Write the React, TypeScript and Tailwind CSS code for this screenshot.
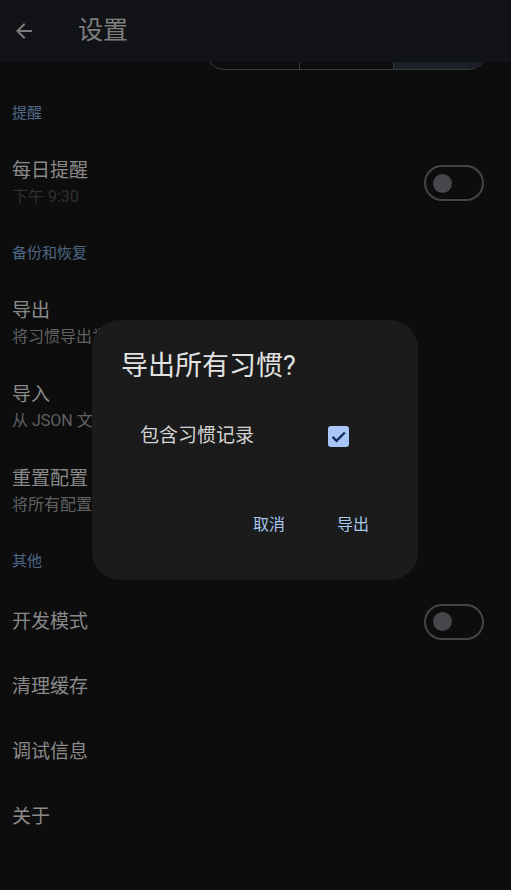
import React, { useState } from 'react';

const font = "font-[Roboto,'Noto_Sans_CJK_SC',sans-serif]";

const Toggle = ({ on }: { on: boolean }) => (
  <div className="w-[60px] h-[36px] rounded-full border-2 border-[#44444a] flex items-center px-[7px]">
    <div className={`w-[19px] h-[19px] rounded-full bg-[#46464b] ${on ? 'ml-auto' : ''}`} />
  </div>
);

const SectionHeader = ({ title }: { title: string }) => (
  <div className="h-[56px] flex items-center px-3">
    <span className="text-[15px] leading-5 text-[#4d6885]">{title}</span>
  </div>
);

const TwoLineItem = ({
  title,
  subtitle,
  dim,
  right,
}: {
  title: string;
  subtitle: string;
  dim?: boolean;
  right?: React.ReactNode;
}) => (
  <div className="h-[84px] flex items-center px-3">
    <div className="flex-1 flex flex-col gap-1 whitespace-nowrap">
      <span className="text-[19px] leading-6 text-[#8a8a8a]">{title}</span>
      <span className={`text-[16px] leading-5 ${dim ? 'text-[#303030]' : 'text-[#616161]'}`}>{subtitle}</span>
    </div>
    {right && <div className="pr-[15px]">{right}</div>}
  </div>
);

const OneLineItem = ({ title, right }: { title: string; right?: React.ReactNode }) => (
  <div className="h-[65px] flex items-center px-3">
    <span className="flex-1 text-[19px] leading-6 text-[#8a8a8a]">{title}</span>
    {right && <div className="pr-[15px]">{right}</div>}
  </div>
);

const ExportDialog = () => {
  const [withRecords, setWithRecords] = useState(true);

  return (
    <div className="absolute left-[92px] top-[320px] w-[326px] h-[260px] rounded-[28px] bg-[#1b1b1b] flex flex-col">
      <div className="pt-[28px] pl-[29px] text-[27px] leading-9 text-[#e2e2e2]">导出所有习惯?</div>
      <div className="mt-[40px] h-[24px] flex items-center pl-[48px] pr-[69px]">
        <span className="flex-1 text-[19px] leading-6 text-[#d4d4d4]">包含习惯记录</span>
        <button
          className={`w-[21px] h-[21px] flex-none rounded-[3px] flex items-center justify-center ${
            withRecords ? 'bg-[#a8c7f8]' : 'border-2 border-[#8a8a8a]'
          }`}
          onClick={() => setWithRecords(!withRecords)}
        >
          {withRecords && (
            <svg width="19" height="19" viewBox="0 0 24 24">
              <path d="M4.5 12.5l5 5L20 7" fill="none" stroke="#0c2d52" strokeWidth="2.8" />
            </svg>
          )}
        </button>
      </div>
      <div className="mt-[65px] flex justify-end items-center pr-[49px] gap-[52px] text-[16px] leading-6 text-[#a6c7ee]">
        <button>取消</button>
        <button>导出</button>
      </div>
    </div>
  );
};

const App = () => {
  const [reminder] = useState(false);
  const [devMode] = useState(false);

  return (
    <div className={`${font} relative w-full h-[890px] overflow-hidden bg-[#0d0d0e]`}>
      {/* Top bar */}
      <header className="h-[62px] bg-[#121316] flex items-center">
        <button className="ml-[12px] w-6 h-6" aria-label="返回">
          <svg width="24" height="24" viewBox="0 0 24 24">
            <path d="M20 11H7.83l5.59-5.59L12 4l-8 8 8 8 1.41-1.41L7.83 13H20v-2z" fill="#7a7a7b" />
          </svg>
        </button>
        <h1 className="ml-[42px] text-[25px] leading-8 text-[#7f7f80]">设置</h1>
      </header>

      {/* Theme segmented control, scrolled under the bar */}
      <div className="h-[8px] overflow-hidden flex items-end">
        <div className="ml-[205px] w-[283px] h-[40px] flex-none rounded-full border border-[#3a3a3d] overflow-hidden flex">
          <div className="flex-1" />
          <div className="flex-1 border-l border-[#3a3a3d]" />
          <div className="flex-1 border-l border-[#3a3a3d] bg-[#1c2027]" />
        </div>
      </div>

      <div className="h-[15px]" />

      <SectionHeader title="提醒" />
      <TwoLineItem title="每日提醒" subtitle="下午 9:30" dim right={<Toggle on={reminder} />} />

      <SectionHeader title="备份和恢复" />
      <TwoLineItem title="导出" subtitle="将习惯导出为 JSON 文件" />
      <TwoLineItem title="导入" subtitle="从 JSON 文件导入习惯" />
      <TwoLineItem title="重置配置" subtitle="将所有配置恢复为默认值" />

      <SectionHeader title="其他" />
      <OneLineItem title="开发模式" right={<Toggle on={devMode} />} />
      <OneLineItem title="清理缓存" />
      <OneLineItem title="调试信息" />
      <OneLineItem title="关于" />

      <ExportDialog />
    </div>
  );
};

export default App;
